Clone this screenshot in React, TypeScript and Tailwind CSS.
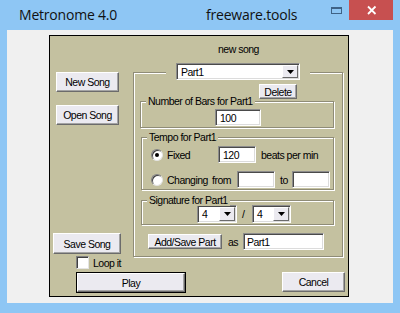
import React from "react";

type P = { className?: string; children?: React.ReactNode };

function Btn({ className = "", children }: P) {
  return (
    <div
      className={`flex items-center justify-center bg-[#ebeaf0] border border-t-white border-l-white border-r-[#6b6b6b] border-b-[#6b6b6b] shadow-[inset_-1px_-1px_0_#a4a4a4] leading-[12px] ${className}`}
    >
      {children}
    </div>
  );
}

function Field({ className = "", children }: P) {
  return (
    <div
      className={`flex items-center bg-white border border-t-[#8c8c8c] border-l-[#8c8c8c] border-r-white border-b-white shadow-[inset_1px_1px_0_#4a4a4a,inset_-1px_-1px_0_#dcdcdc] leading-[12px] ${className}`}
    >
      {children}
    </div>
  );
}

function Arrow({ className = "" }: P) {
  return (
    <div
      className={`w-[16px] mr-[1px] flex items-center justify-center bg-[#ebeaf0] border border-t-white border-l-white border-r-[#6b6b6b] border-b-[#6b6b6b] ${className}`}
    >
      <svg width="7" height="4" viewBox="0 0 7 4">
        <polygon points="0,0 7,0 3.5,4" fill="#000" />
      </svg>
    </div>
  );
}

function Radio({ checked }: { checked?: boolean }) {
  return (
    <div className="w-[12px] h-[12px] shrink-0 rounded-full bg-white border border-t-[#808080] border-l-[#808080] border-r-[#e4e4e4] border-b-[#e4e4e4] shadow-[inset_1px_1px_0_#404040] flex items-center justify-center">
      {checked && <div className="w-[4px] h-[4px] rounded-full bg-black" />}
    </div>
  );
}

function Group({
  className = "",
  caption,
  children,
}: P & { caption?: string }) {
  return (
    <div
      className={`relative border border-[#8f8c77] shadow-[inset_1px_1px_0_#fff,1px_1px_0_#fff] ${className}`}
    >
      {caption && (
        <span className="absolute -top-[7px] left-[5px] px-[2px] leading-[12px] whitespace-nowrap bg-[#c4c1a0]">
          {caption}
        </span>
      )}
      {children}
    </div>
  );
}

export default function App() {
  return (
    <div className="w-[400px] h-[313px] bg-[#8ec6f4] overflow-hidden">
      {/* Title bar */}
      <div className="flex h-[30px] items-start font-['Open_Sans',sans-serif] text-[14px] leading-[14px] text-[#111] tracking-[-0.2px]">
        <div className="w-[206px] pl-[19px] pt-[8px] whitespace-nowrap">Metronome 4.0</div>
        <div className="w-[124px] pt-[8px] whitespace-nowrap">freeware.tools</div>
        <div className="w-[19px] pt-[7px] pl-[1px]">
          <div className="w-[11px] h-[7px] border border-t-2 border-[#3f6286]" />
        </div>
        <div className="w-[44px] h-[20px] bg-[#c75050]">
          <svg width="44" height="20" viewBox="0 0 44 20">
            <line x1="19" y1="6.5" x2="26.5" y2="14" stroke="#fff" strokeWidth="1.8" />
            <line x1="26.5" y1="6.5" x2="19" y2="14" stroke="#fff" strokeWidth="1.8" />
          </svg>
        </div>
      </div>

      {/* Client area */}
      <div className="ml-[7px] w-[386px] h-[273px] bg-[#f0f0f0] pt-[5px] pl-[42px] font-['Liberation_Sans',Arial,sans-serif] text-[10.5px] tracking-[-0.5px] text-black leading-[12px]">
        <div className="w-[300px] h-[262px] border border-black bg-[#c4c1a0] flex flex-col">
          <div className="flex h-[221px]">
            {/* left column */}
            <div className="w-[83px] flex flex-col">
              <Btn className="ml-[6px] mt-[36px] w-[63px] h-[20px]">New Song</Btn>
              <Btn className="ml-[6px] mt-[13px] w-[63px] h-[20px]">Open Song</Btn>
              <Btn className="ml-[3px] mt-auto mb-[3px] w-[68px] h-[21px]">Save Song</Btn>
            </div>
            {/* right column */}
            <div className="w-[211px] flex flex-col">
              <div className="h-[36px] pt-[7px] text-center">new song</div>
              <Group className="w-[210px] h-[185px] flex flex-col">
                <div className="absolute left-[32px] -top-[10px] px-[10px] bg-[#c4c1a0]">
                  <Field className="w-[124px] h-[17px]">
                    <span className="pl-[4px] flex-1">Part1</span>
                    <Arrow className="h-[13px]" />
                  </Field>
                </div>
                <Btn className="ml-[125px] mt-[11px] w-[38px] h-[15px]">Delete</Btn>

                <Group caption="Number of Bars for Part1" className="ml-[6px] mt-[2px] w-[194px] h-[27px] shrink-0">
                  <Field className="ml-[74px] mt-[7px] w-[46px] h-[17px]">
                    <span className="pl-[4px]">100</span>
                  </Field>
                </Group>

                <Group caption="Tempo for Part1" className="ml-[7px] mt-[9px] w-[193px] h-[53px] shrink-0">
                  <div className="flex items-center h-[17px] mt-[8px]">
                    <div className="w-[76px] flex items-center pl-[9px]">
                      <Radio checked />
                      <span className="ml-[4px]">Fixed</span>
                    </div>
                    <Field className="w-[38px] h-[17px]">
                      <span className="pl-[4px]">120</span>
                    </Field>
                    <span className="ml-[5px] whitespace-nowrap">beats per min</span>
                  </div>
                  <div className="flex items-center h-[17px] mt-[8px]">
                    <div className="flex items-center pl-[9px]">
                      <Radio />
                      <span className="ml-[4px] w-[45px]">Changing</span>
                      <span className="w-[25px]">from</span>
                    </div>
                    <Field className="w-[38px] h-[17px]" />
                    <span className="ml-[5px] w-[12px]">to</span>
                    <Field className="w-[38px] h-[17px]" />
                  </div>
                </Group>

                <Group caption="Signature for Part1" className="ml-[7px] mt-[10px] w-[193px] h-[25px] shrink-0">
                  <div className="flex items-center h-[18px] mt-[4px]">
                    <Field className="ml-[55px] w-[40px] h-[18px]">
                      <span className="pl-[4px] flex-1">4</span>
                      <Arrow className="h-[14px]" />
                    </Field>
                    <span className="ml-[5px] w-[10px]">/</span>
                    <Field className="w-[39px] h-[18px]">
                      <span className="pl-[4px] flex-1">4</span>
                      <Arrow className="h-[14px]" />
                    </Field>
                  </div>
                </Group>

                <div className="flex items-center h-[17px] mt-[8px]">
                  <Btn className="ml-[14px] w-[74px] h-[15px]">Add/Save Part</Btn>
                  <span className="ml-[6px] w-[15px]">as</span>
                  <Field className="w-[81px] h-[17px]">
                    <span className="pl-[3px]">Part1</span>
                  </Field>
                </div>
              </Group>
            </div>
          </div>

          {/* bottom */}
          <div className="flex flex-col pl-[26px]">
            <div className="flex items-center -mt-[1px] h-[13px]">
              <div className="w-[13px] h-[13px] bg-white border border-t-[#808080] border-l-[#808080] border-r-[#e4e4e4] border-b-[#e4e4e4] shadow-[inset_1px_1px_0_#404040]" />
              <span className="ml-[4px]">Loop it</span>
            </div>
            <div className="flex items-start mt-[3px]">
              <div className="w-[110px] h-[21px] border border-black">
                <Btn className="w-full h-full">Play</Btn>
              </div>
              <Btn className="ml-[96px] w-[63px] h-[20px]">Cancel</Btn>
            </div>
          </div>
        </div>
      </div>
    </div>
  );
}
